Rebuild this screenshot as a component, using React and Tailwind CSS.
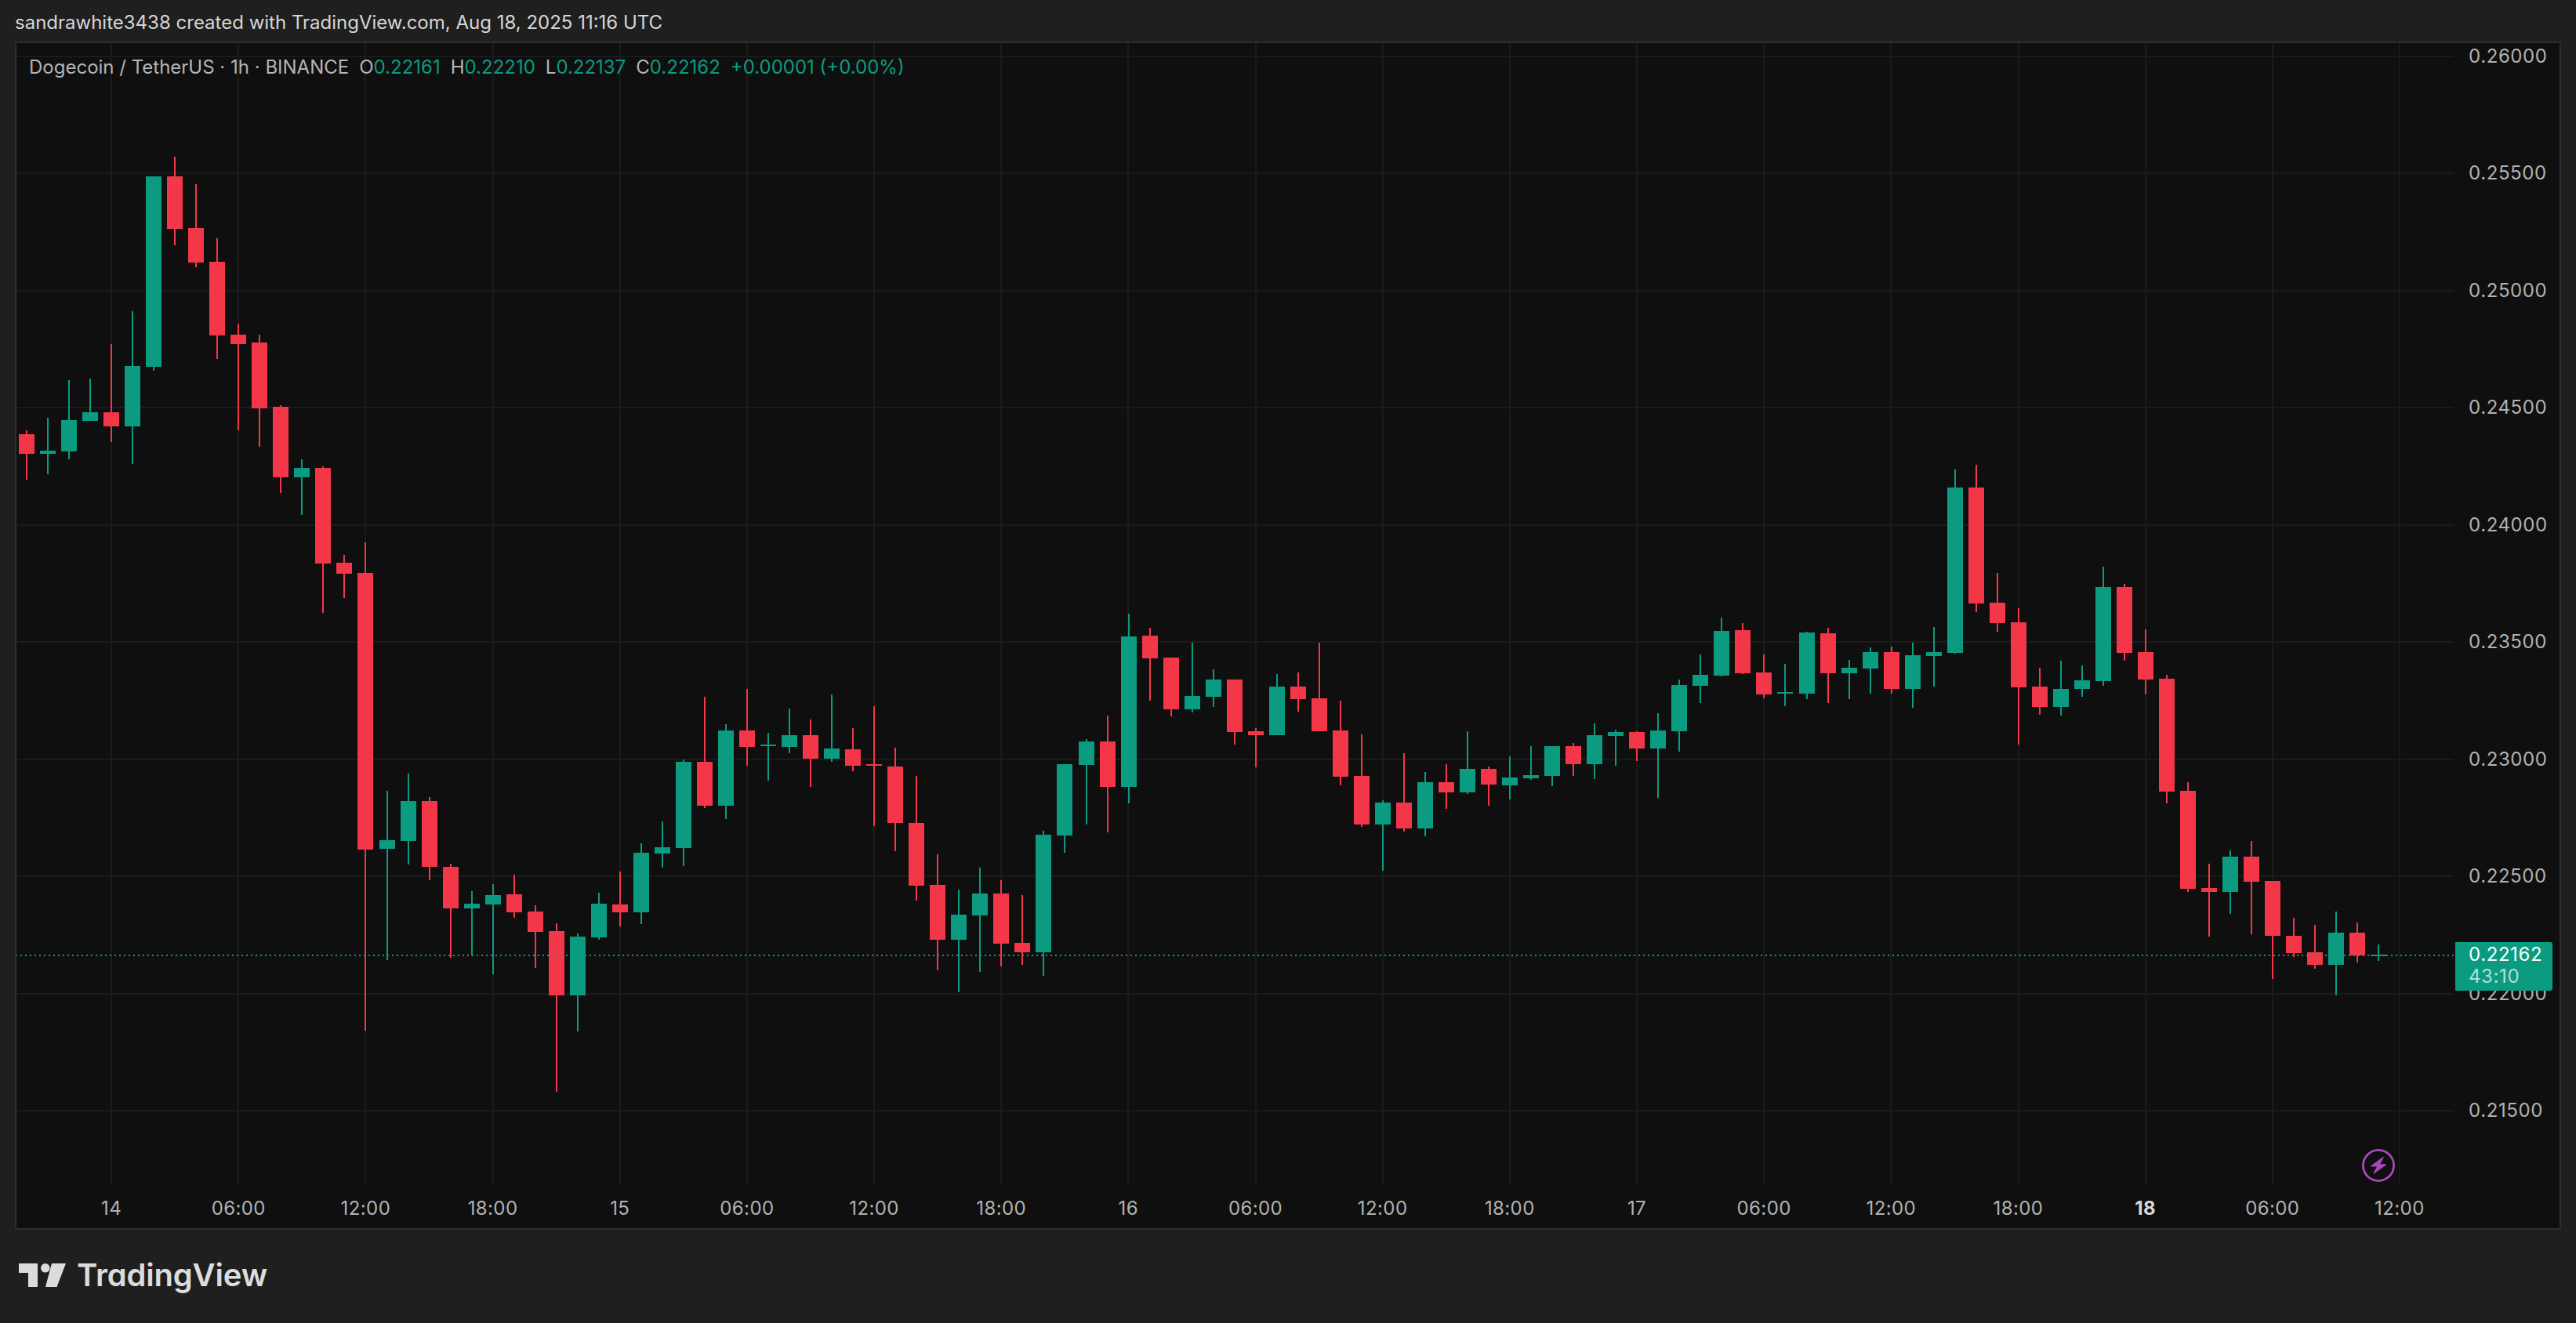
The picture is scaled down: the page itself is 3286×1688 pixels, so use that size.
import React from 'react';

// [direction, wick top, body top, body bottom, wick bottom], in page pixels
const candles = [
  ['r', 549, 554, 579, 612], ['g', 533, 575, 579, 605], ['g', 485, 536, 576, 586], ['g', 483, 526, 537, 537],
  ['r', 439, 526, 544, 564], ['g', 397, 467, 544, 592], ['g', 225, 225, 468, 473], ['r', 200, 225, 292, 313],
  ['r', 235, 291, 335, 341], ['r', 304, 334, 428, 458], ['r', 413, 427, 439, 549], ['r', 427, 437, 521, 570],
  ['r', 517, 519, 609, 629], ['g', 586, 597, 609, 657], ['r', 595, 597, 719, 782], ['r', 708, 718, 732, 763],
  ['r', 692, 731, 1084, 1315], ['g', 1009, 1072, 1083, 1225], ['g', 987, 1022, 1073, 1103], ['r', 1017, 1022, 1106, 1123],
  ['r', 1102, 1106, 1159, 1222], ['g', 1137, 1153, 1159, 1219], ['g', 1128, 1142, 1154, 1243], ['r', 1116, 1141, 1164, 1171],
  ['r', 1155, 1163, 1189, 1235], ['r', 1178, 1188, 1270, 1393], ['g', 1191, 1195, 1270, 1316], ['g', 1139, 1153, 1196, 1199],
  ['r', 1112, 1154, 1164, 1182], ['g', 1076, 1088, 1164, 1179], ['g', 1048, 1081, 1089, 1107], ['g', 969, 972, 1082, 1105],
  ['r', 889, 972, 1028, 1031], ['g', 924, 932, 1028, 1045], ['r', 879, 932, 953, 977], ['g', 935, 950, 952, 996],
  ['g', 904, 938, 953, 961], ['r', 918, 938, 968, 1004], ['g', 886, 955, 968, 972], ['r', 929, 956, 977, 984],
  ['r', 901, 975, 977, 1054], ['r', 954, 978, 1050, 1086], ['r', 990, 1050, 1130, 1149], ['r', 1090, 1129, 1199, 1238],
  ['g', 1135, 1167, 1199, 1266], ['g', 1107, 1140, 1168, 1240], ['r', 1123, 1140, 1204, 1233], ['r', 1142, 1203, 1215, 1231],
  ['g', 1060, 1065, 1215, 1245], ['g', 975, 975, 1066, 1088], ['g', 943, 946, 976, 1052], ['r', 913, 946, 1004, 1062],
  ['g', 783, 812, 1004, 1025], ['r', 801, 811, 840, 894], ['r', 839, 839, 905, 914], ['g', 820, 888, 905, 909],
  ['g', 854, 867, 889, 902], ['r', 867, 867, 934, 950], ['r', 929, 933, 938, 979], ['g', 860, 876, 938, 938],
  ['r', 858, 876, 892, 908], ['r', 820, 891, 933, 933], ['r', 894, 932, 991, 1002], ['r', 937, 990, 1052, 1055],
  ['g', 1021, 1024, 1052, 1111], ['r', 961, 1024, 1057, 1061], ['g', 985, 998, 1057, 1067], ['r', 975, 998, 1011, 1032],
  ['g', 933, 981, 1011, 1013], ['r', 978, 981, 1001, 1028], ['g', 965, 992, 1002, 1020], ['g', 952, 989, 993, 995],
  ['g', 952, 952, 990, 1003], ['r', 948, 952, 975, 990], ['g', 923, 938, 975, 994], ['g', 931, 934, 939, 977],
  ['r', 933, 934, 955, 971], ['g', 910, 932, 955, 1018], ['g', 867, 874, 933, 959], ['g', 835, 861, 875, 897],
  ['g', 788, 805, 862, 863], ['r', 795, 804, 859, 860], ['r', 835, 858, 886, 891], ['g', 847, 883, 885, 901],
  ['g', 806, 807, 885, 892], ['r', 801, 808, 859, 897], ['g', 842, 852, 859, 892], ['g', 826, 832, 853, 885],
  ['r', 825, 832, 879, 885], ['g', 820, 836, 879, 903], ['g', 800, 832, 837, 876], ['g', 599, 622, 833, 834],
  ['r', 593, 622, 770, 781], ['r', 731, 769, 795, 806], ['r', 776, 794, 877, 950], ['r', 852, 876, 902, 912],
  ['g', 843, 879, 902, 913], ['g', 849, 868, 879, 889], ['g', 723, 749, 869, 875], ['r', 745, 749, 833, 843],
  ['r', 803, 832, 867, 886], ['r', 861, 866, 1010, 1025], ['r', 998, 1009, 1134, 1138], ['r', 1102, 1133, 1138, 1195],
  ['g', 1085, 1093, 1138, 1166], ['r', 1073, 1093, 1125, 1192], ['r', 1124, 1124, 1194, 1249], ['r', 1171, 1194, 1216, 1221],
  ['r', 1180, 1215, 1231, 1236], ['g', 1163, 1190, 1231, 1270], ['r', 1177, 1190, 1219, 1228], ['g', 1205, 1218, 1220, 1226],
];

const prices = ['0.26000', '0.25500', '0.25000', '0.24500', '0.24000', '0.23500', '0.23000', '0.22500', '0.22000', '0.21500'];
const times = ['14', '06:00', '12:00', '18:00', '15', '06:00', '12:00', '18:00', '16', '06:00', '12:00', '18:00', '17', '06:00', '12:00', '18:00', '18', '06:00', '12:00'];

const colors = { g: '#0a9b81', r: '#f43649' };

const Ohlc = ({ label, value }) => (
  <span className="mr-[13px]">
    {label}
    <span className="text-[#0a9b81]">{value}</span>
  </span>
);

const Chart = () => (
  <svg viewBox="21 55 3109 1457" width="3109" height="1457" className="block" shapeRendering="crispEdges">
    {prices.map((p, i) => (
      <rect key={p} x="21" y={71 + i * 149.44} width="3109" height="2" fill="#1b1b1b" />
    ))}
    {times.map((t, i) => (
      <rect key={i} x={Math.round(141 + i * 162.17)} y="55" width="2" height="1457" fill="#1b1b1b" />
    ))}
    {candles.map(([dir, wickTop, top, bottom, wickBottom], i) => {
      const cx = Math.round(34 + i * 27.03);
      return (
        <g key={i} fill={colors[dir]}>
          <rect x={cx - 1} y={wickTop} width="2" height={wickBottom - wickTop} />
          <rect x={cx - 10} y={top} width="20" height={bottom - top} />
        </g>
      );
    })}
    <line x1="20" y1="1219" x2="3130" y2="1219" stroke="#0a9b81" strokeWidth="2" strokeDasharray="2 4" />
  </svg>
);

const App = () => {
  return (
    <div className="w-[3286px] h-[1688px] overflow-hidden bg-[#1f1f1f] font-['Inter',sans-serif]">
      {/* snapshot caption */}
      <div className="h-[53px] pl-[19px] pt-[12px] text-[24px] leading-[34px] text-[#d6d6d6]">
        sandrawhite3438 created with TradingView.com, Aug 18, 2025 11:16 UTC
      </div>

      {/* chart frame */}
      <div className="ml-[19px] w-[3248px] h-[1516px] border-2 border-[#2e2e2e] bg-[#0f0f0f]">
        <div className="flex h-[1457px]">
          <div className="relative w-[3109px] shrink-0">
            <Chart />
            <div className="absolute left-[16px] top-[14px] flex text-[24px] leading-[34px] text-[#b4b4b4]">
              <span className="mr-[13px]">Dogecoin / TetherUS · 1h · BINANCE</span>
              <Ohlc label="O" value="0.22161" />
              <Ohlc label="H" value="0.22210" />
              <Ohlc label="L" value="0.22137" />
              <Ohlc label="C" value="0.22162" />
              <span className="text-[#0a9b81]">+0.00001 (+0.00%)</span>
            </div>
            <svg viewBox="0 0 42 42" width="42" height="42" className="absolute left-[2992px] top-[1411px]">
              <circle cx="21" cy="21" r="19.6" fill="none" stroke="#ab47bc" strokeWidth="2.8" />
              <path d="M27 10.7 12 21.7H20.3L15.3 30.7 30.3 20H22Z" fill="#ab47bc" stroke="#ab47bc" strokeWidth="1.4" strokeLinejoin="round" />
            </svg>
          </div>

          {/* price scale */}
          <div className="relative flex-1 pl-[19px] text-[24px] leading-[34px] tracking-[0.6px] text-[#b2b2b2]">
            {prices.map(p => (
              <div key={p} className="h-[149.44px]">{p}</div>
            ))}
            <div className="absolute left-[2px] top-[1147px] w-[124px] h-[62px] pl-[17px] pt-[1px] rounded-r-[3px] bg-[#0a9b81] text-[24px] leading-[28px] tracking-[0.6px] text-white">
              <div className="pt-[1px]">0.22162</div>
              <div className="text-white/70">43:10</div>
            </div>
          </div>
        </div>

        {/* time scale */}
        <div className="flex pl-[40px] pt-[13px] text-[24px] leading-[34px] tracking-[0.4px] text-[#b2b2b2]">
          {times.map((t, i) => (
            <div key={i} className={`w-[162.17px] shrink-0 text-center ${t === '18' ? 'font-bold text-[#d8d8d8]' : ''}`}>
              {t}
            </div>
          ))}
        </div>
      </div>

      {/* logo */}
      <div className="flex items-center pl-[24px] pt-[43px] text-[#dcdcdc]">
        <svg viewBox="0 0 60 30" width="60" height="30" fill="currentColor" className="shrink-0">
          <path d="M0 0H24V30H12V12H0Z" />
          <circle cx="33.8" cy="5.8" r="5.8" />
          <path d="M42 0H60L48.5 30H34Z" />
        </svg>
        <span className="ml-[14px] text-[40px] leading-[30px] font-semibold tracking-[-0.2px] [font-feature-settings:'cv11']">TradingView</span>
      </div>
    </div>
  );
};

export default App;
